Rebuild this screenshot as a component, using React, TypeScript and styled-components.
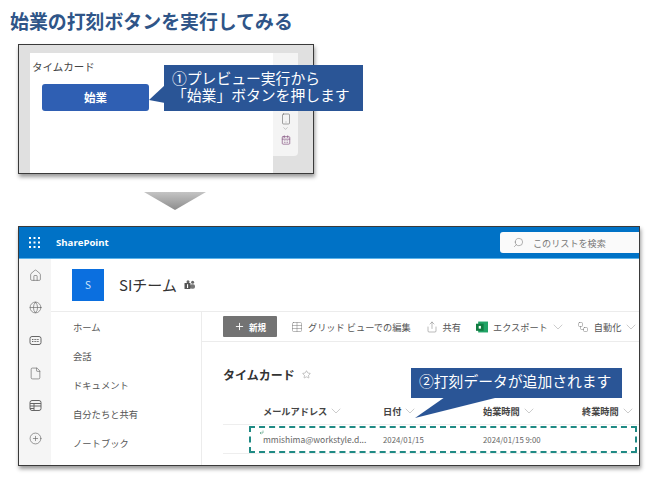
import React from 'react';
import styled, { createGlobalStyle } from 'styled-components';
import {
  Home,
  Globe,
  File,
  CirclePlus,
  Plus,
  Table,
  Share,
  ChevronDown,
  Workflow,
  Search,
  Star,
  Smartphone,
  CalendarDays,
} from 'lucide-react';

const GlobalStyle = createGlobalStyle`
  html, body {
    margin: 0;
    background: #fff;
    font-family: 'Noto Sans CJK JP', 'Liberation Sans', sans-serif;
  }
  * { box-sizing: border-box; }
`;

const Page = styled.div`
  width: 658px;
  height: 486px;
  overflow: hidden;
  position: relative;
`;

const Heading = styled.h1`
  margin: 0;
  height: 44px;
  padding: 10px 0 0 10px;
  font-size: 18.9px;
  line-height: 22px;
  font-weight: 700;
  color: #2f5588;
`;

const Frame = styled.div<{ $w: number; $h: number }>`
  position: relative;
  margin-left: 18px;
  width: ${(p) => p.$w}px;
  height: ${(p) => p.$h}px;
  border: 1px solid #3a3a3a;
  box-shadow: 1px 3px 4px rgba(0, 0, 0, 0.4);
`;

const PreviewBody = styled.div`
  display: flex;
  align-items: flex-start;
  height: 100%;
  padding: 8px 0 0 11px;
  background: #e0e0e0;
`;

const Canvas = styled.div`
  width: 243px;
  height: 120px;
  padding: 6px 0 0 2px;
  background: #fff;
`;

const CanvasTitle = styled.div`
  font-size: 10.5px;
  line-height: 16px;
  color: #444;
`;

const StartButton = styled.div`
  margin: 9px 0 0 10px;
  width: 107px;
  height: 27px;
  border-radius: 3px;
  background: #2f5fb3;
  color: #fff;
  font-size: 11.5px;
  font-weight: 700;
  line-height: 27px;
  text-align: center;
`;

const SideTools = styled.div`
  display: flex;
  flex-direction: column;
  align-items: center;
  justify-content: flex-end;
  width: 25px;
  height: 103px;
  padding-bottom: 11px;
  color: #666;
  background: #f4f4f4;
  border-radius: 0 0 4px 0;
`;

const Callout = styled.div<{ $x: number; $y: number; $w: number; $h: number }>`
  position: absolute;
  left: ${(p) => p.$x}px;
  top: ${(p) => p.$y}px;
  width: ${(p) => p.$w}px;
  height: ${(p) => p.$h}px;
  padding: 4px 0 0 8px;
  background: #2a5596;
  color: #fff;
  font-size: 14.8px;
  line-height: 17px;
  white-space: pre;
`;

const CalloutTip = styled.svg`
  position: absolute;
  overflow: visible;
  left: 0;
  top: 0;
`;

const DownArrow = styled.div`
  margin: 18px 0 16px 144px;
  width: 62px;
  height: 18px;
  background: linear-gradient(#c4c4c4, #8c8c8c);
  clip-path: polygon(0 0, 100% 0, 50% 100%);
`;

const SuiteBar = styled.div`
  display: flex;
  align-items: center;
  height: 32px;
  padding-left: 10px;
  background: #0072c6;
  border-bottom: 1px solid #5cb4ea;
  color: #fff;
`;

const Waffle = styled.svg`
  width: 11px;
  height: 11px;
  margin-right: 16px;
`;

const BrandName = styled.span`
  font-family: 'Open Sans', sans-serif;
  font-size: 9.6px;
  font-weight: 700;
`;

const SearchBox = styled.div`
  display: flex;
  align-items: center;
  gap: 9px;
  margin-left: auto;
  width: 139px;
  height: 21px;
  padding-left: 13px;
  border-radius: 3px 0 0 3px;
  background: #fafafa;
  color: #777;
  font-size: 9.1px;
`;

const Body = styled.div`
  display: flex;
  height: 206px;
`;

const Rail = styled.div`
  display: grid;
  grid-auto-rows: 32.6px;
  justify-items: center;
  align-items: center;
  width: 32px;
  background: #f5f5f5;
  color: #666;
`;

const RailGlyph = styled.svg`
  width: 13px;
  height: 13px;
  fill: none;
  stroke: currentColor;
  stroke-width: 1;
`;

const Content = styled.div`
  flex: 1;
  min-width: 0;
  display: flex;
  flex-direction: column;
`;

const SiteHead = styled.div`
  display: flex;
  align-items: center;
  height: 53px;
  padding: 0 0 0 21px;
  border-bottom: 1px solid #ececec;
`;

const SiteTile = styled.div`
  width: 32px;
  height: 32px;
  margin-right: 15px;
  background: #0b6fdf;
  color: #cfe4fb;
  font-size: 10px;
  line-height: 32px;
  text-align: center;
`;

const SiteName = styled.div`
  font-size: 15px;
  line-height: 20px;
  color: #333;
`;

const TeamsMark = styled.svg`
  width: 11px;
  height: 10px;
  margin-left: 7px;
`;

const Lower = styled.div`
  flex: 1;
  display: flex;
  min-height: 0;
`;

const SiteNav = styled.div`
  width: 151px;
  padding: 1px 0 0 22px;
  border-right: 1px solid #ececec;
`;

const NavItem = styled.div`
  height: 29px;
  font-size: 9.3px;
  line-height: 29px;
  color: #555;
`;

const Main = styled.div`
  flex: 1;
  min-width: 0;
  overflow: hidden;
`;

const CommandBar = styled.div`
  display: flex;
  align-items: center;
  height: 30px;
  padding-left: 21px;
  border-bottom: 1px solid #ececec;
  font-size: 9.2px;
  color: #555;
  white-space: nowrap;
`;

const NewButton = styled.div`
  display: flex;
  align-items: center;
  justify-content: center;
  gap: 4px;
  width: 54px;
  height: 21px;
  margin-right: 14px;
  border-radius: 1px;
  background: #737373;
  color: #fff;
  font-size: 8.6px;
  font-weight: 700;
`;

const Command = styled.div<{ $gap: number }>`
  display: flex;
  align-items: center;
  gap: 5px;
  margin-right: ${(p) => p.$gap}px;
  svg { flex: none; color: #777; }
`;

const Caret = styled(ChevronDown)`
  margin: 0 -3px;
  && { color: #aaa; }
`;

const ExcelIcon = styled.svg`
  width: 12px;
  height: 12px;
`;

const ListTitle = styled.div`
  display: flex;
  align-items: center;
  gap: 7px;
  margin: 24px 0 15px 21px;
  height: 17px;
  font-size: 12px;
  font-weight: 700;
  color: #333;
`;

const Row = styled.div<{ $h: number }>`
  position: relative;
  display: grid;
  grid-template-columns: 120px 100px 99px 1fr;
  align-items: center;
  height: ${(p) => p.$h}px;
  margin-left: 21px;
  padding-left: 40px;
  border-bottom: 1px solid #eee;
`;

const HeadCell = styled.div`
  display: flex;
  align-items: center;
  gap: 4px;
  font-size: 9.2px;
  font-weight: 700;
  color: #444;
`;

const Cell = styled.div<{ $size: number }>`
  font-size: ${(p) => p.$size}px;
  color: #666;
  white-space: nowrap;
`;

const NewMark = styled.svg`
  position: absolute;
  left: 36px;
  top: 5px;
  width: 5px;
  height: 5px;
`;

const Highlight = styled.div`
  position: absolute;
  left: 26px;
  right: 2px;
  top: 1px;
  height: 27px;
  border: 2px dashed #1f8a84;
  border-radius: 1px;
`;

const NewsCard = () => (
  <RailGlyph viewBox="0 0 13 13">
    <rect x="1" y="2.5" width="11" height="8" rx="2" />
    <path d="M3 5.5h7M3 7.5h7" strokeDasharray="1 0.6" />
  </RailGlyph>
);

const ListPanel = () => (
  <RailGlyph viewBox="0 0 13 13">
    <rect x="1" y="1.5" width="11" height="10" rx="2" />
    <path d="M1 4.5h11M1 7h11M1 9.5h4M5 4.5v7" />
  </RailGlyph>
);

const navItems = ['ホーム', '会話', 'ドキュメント', '自分たちと共有', 'ノートブック'];
const columns = ['メールアドレス', '日付', '始業時間', '終業時間'];

const App: React.FC = () => {
  return (
    <Page>
      <GlobalStyle />
      <Heading>始業の打刻ボタンを実行してみる</Heading>

      <Frame $w={296} $h={130}>
        <PreviewBody>
          <Canvas>
            <CanvasTitle>タイムカード</CanvasTitle>
            <StartButton>始業</StartButton>
          </Canvas>
          <SideTools>
            <Smartphone size={12} strokeWidth={1.2} />
            <ChevronDown size={7} strokeWidth={1.2} />
            <CalendarDays size={10} strokeWidth={1.8} color="#8a5a86" style={{ marginTop: 3 }} />
          </SideTools>
        </PreviewBody>
        <Callout $x={145} $y={20} $w={199} $h={46}>
          <CalloutTip width="1" height="1">
            <polygon points="1,20 -15,35 1,38" fill="#2a5596" />
          </CalloutTip>
          {'①プレビュー実行から\n「始業」ボタンを押します'}
        </Callout>
      </Frame>

      <DownArrow />

      <Frame $w={622} $h={240}>
        <SuiteBar>
          <Waffle viewBox="0 0 11 11" fill="#fff">
            {[0, 4.5, 9].map((y) =>
              [0, 4.5, 9].map((x) => <rect key={`${x}-${y}`} x={x} y={y} width="2" height="2" />)
            )}
          </Waffle>
          <BrandName>SharePoint</BrandName>
          <SearchBox>
            <Search size={11} strokeWidth={1.2} style={{ transform: 'scaleX(-1)' }} />
            このリストを検索
          </SearchBox>
        </SuiteBar>
        <Body>
          <Rail>
            <Home size={13} strokeWidth={1.2} />
            <Globe size={13} strokeWidth={1.2} />
            <NewsCard />
            <File size={13} strokeWidth={1.2} />
            <ListPanel />
            <CirclePlus size={13} strokeWidth={1.2} />
          </Rail>
          <Content>
            <SiteHead>
              <SiteTile>S</SiteTile>
              <SiteName>SIチーム</SiteName>
              <TeamsMark viewBox="0 0 11 10">
                <circle cx="8.6" cy="2.2" r="1.5" fill="#666" />
                <rect x="6" y="4.2" width="5" height="4.5" rx="1.8" fill="#777" />
                <circle cx="4" cy="1.8" r="1.5" fill="#666" />
                <rect x="0.5" y="3" width="6" height="6" rx="0.6" fill="#555" />
                <rect x="3" y="4.2" width="1.1" height="3.8" fill="#fff" />
              </TeamsMark>
            </SiteHead>
            <Lower>
              <SiteNav>
                {navItems.map((label) => (
                  <NavItem key={label}>{label}</NavItem>
                ))}
              </SiteNav>
              <Main>
                <CommandBar>
                  <NewButton>
                    <Plus size={11} strokeWidth={2} />
                    新規
                  </NewButton>
                  <Command $gap={15}>
                    <Table size={12} strokeWidth={1} />
                    グリッド ビューでの編集
                  </Command>
                  <Command $gap={15}>
                    <Share size={12} strokeWidth={1} />
                    共有
                  </Command>
                  <Command $gap={14}>
                    <ExcelIcon viewBox="0 0 11 11">
                      <rect x="2" y="0.5" width="9" height="10" fill="#21a366" />
                      <rect x="0" y="2.5" width="7" height="6.5" fill="#107c41" />
                      <rect x="2.5" y="4.5" width="2" height="2.5" fill="#fff" />
                    </ExcelIcon>
                    エクスポート
                    <Caret size={16} strokeWidth={0.9} />
                  </Command>
                  <Command $gap={0}>
                    <Workflow size={12} strokeWidth={1} />
                    自動化
                    <Caret size={16} strokeWidth={0.9} />
                  </Command>
                </CommandBar>
                <ListTitle>
                  タイムカード
                  <Star size={9} strokeWidth={1} color="#666" />
                </ListTitle>
                <Row $h={27}>
                  {columns.map((label) => (
                    <HeadCell key={label}>
                      {label}
                      <Caret size={16} strokeWidth={0.9} />
                    </HeadCell>
                  ))}
                </Row>
                <Row $h={29}>
                  <NewMark viewBox="0 0 5 5">
                    <path d="M4 0.5v2.5H1M2.2 1.8L1 3l1.2 1.2" fill="none" stroke="#4b9a78" strokeWidth="0.6" />
                  </NewMark>
                  <Cell $size={8.5}>mmishima@workstyle.d...</Cell>
                  <Cell $size={7.8}>2024/01/15</Cell>
                  <Cell $size={7.8}>2024/01/15 9:00</Cell>
                  <Cell $size={7.8} />
                  <Highlight />
                </Row>
              </Main>
            </Lower>
          </Content>
        </Body>
        <Callout $x={392} $y={141} $w={211} $h={30}>
          <CalloutTip width="1" height="1">
            <polygon points="34,29 88,29 4,50" fill="#2a5596" />
          </CalloutTip>
          {'②打刻データが追加されます'}
        </Callout>
      </Frame>
    </Page>
  );
};

export default App;
